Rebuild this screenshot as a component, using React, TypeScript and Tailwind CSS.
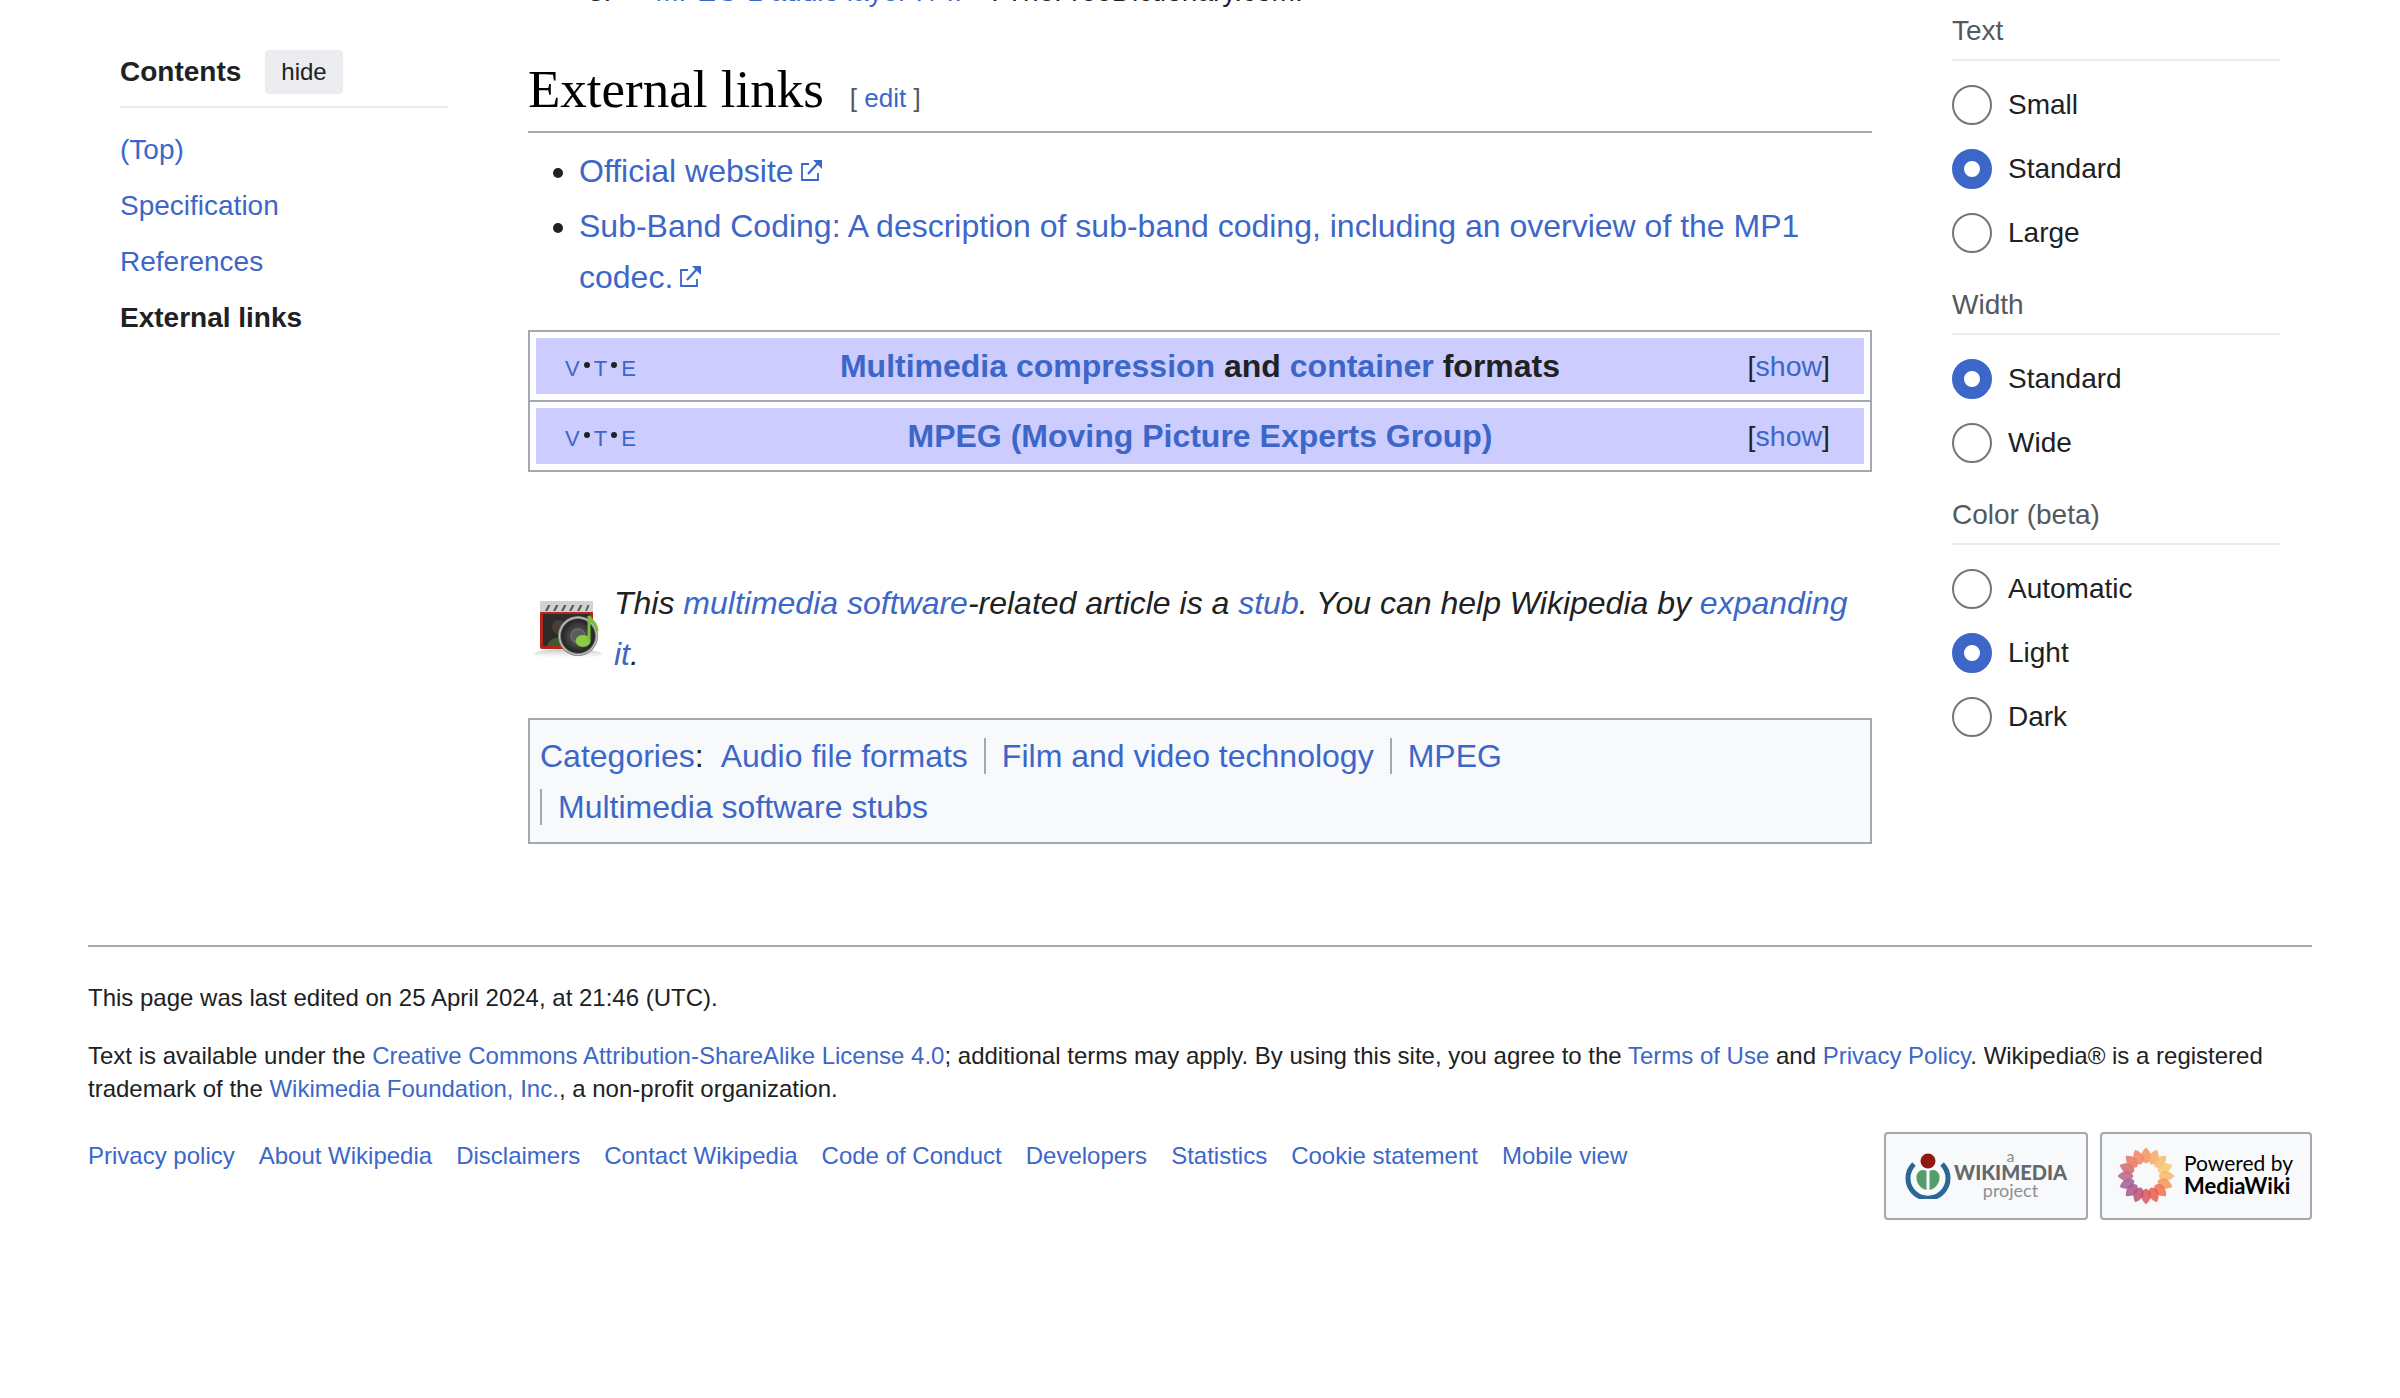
import React from "react";

const link = "text-[#3c67c8]";

function ExternalIcon() {
  return (
    <svg viewBox="0 0 12 12" className="inline-block w-[24px] h-[24px] ml-[5px] align-[-1px]" fill="none" stroke="#3c67c8">
      <path d="M5 2.5H1.5v8h8V7" strokeWidth="0.9" />
      <path d="M4.5 7.5L9.5 2" strokeWidth="1.1" />
      <path d="M7 .5h4.5V5z" fill="#3c67c8" stroke="none" />
    </svg>
  );
}

function Radio({ label, checked }: { label: string; checked?: boolean }) {
  return (
    <div className="flex items-center h-[40px] mb-[24px] last:mb-0">
      {checked ? (
        <span className="w-[40px] h-[40px] rounded-full border-[12px] border-[#3c67c8] bg-white" />
      ) : (
        <span className="w-[40px] h-[40px] rounded-full border-2 border-[#72777d] bg-white" />
      )}
      <span className="ml-[16px] text-[28px] text-[#202122]">{label}</span>
    </div>
  );
}

function Group({ title, items, checked }: { title: string; items: string[]; checked: string }) {
  return (
    <div className="mb-[32px]">
      <div className="text-[28px] leading-[40px] text-[#54595d] border-b-2 border-[#eaecf0] pb-[8px] mb-[24px]">
        {title}
      </div>
      {items.map((item) => (
        <Radio key={item} label={item} checked={item === checked} />
      ))}
    </div>
  );
}

function Dot() {
  return <span className="inline-block w-[6px] h-[6px] mx-[4px] rounded-full bg-[#202122] align-[8px]" />;
}

function Navbox({ children }: { children: React.ReactNode }) {
  return (
    <div className="bg-[#ccccff] h-[56px] grid grid-cols-[1fr_auto_1fr] items-center text-[32px] font-bold">
      <div className={`pl-[29px] pt-[6px] text-[22px] leading-[28px] font-normal whitespace-nowrap ${link}`}>
        V<Dot />T<Dot />E
      </div>
      <div>{children}</div>
      <div className="justify-self-end pr-[34px] text-[28.5px] font-normal text-[#202122]">
        [<span className={link}>show</span>]
      </div>
    </div>
  );
}

function StubIcon() {
  return (
    <svg viewBox="0 0 68 64" className="ml-[6px] w-[68px] h-[64px] shrink-0">
      <defs>
        <radialGradient id="disc" cx="0.5" cy="0.5" r="0.5">
          <stop offset="0" stopColor="#777" />
          <stop offset="0.4" stopColor="#4a4a4a" />
          <stop offset="0.82" stopColor="#242424" />
          <stop offset="0.92" stopColor="#c4c4c4" />
          <stop offset="1" stopColor="#777" />
        </radialGradient>
        <linearGradient id="shade" x1="0" y1="0" x2="0" y2="1">
          <stop offset="0" stopColor="#bbb" stopOpacity="0.9" />
          <stop offset="1" stopColor="#eee" stopOpacity="0" />
        </linearGradient>
      </defs>
      <ellipse cx="34" cy="57" rx="34" ry="5" fill="url(#shade)" />
      <rect x="6" y="14" width="53" height="38" rx="2" fill="#b3261b" />
      <rect x="9" y="17" width="47" height="32" fill="#2e2c2a" />
      <circle cx="25" cy="30" r="7" fill="#4a3d32" />
      <path d="M13 49c2-7 8-9 14-8v8z" fill="#3d5a2c" />
      <rect x="6" y="4" width="53" height="11" rx="1" fill="#d2d2d2" />
      <path d="M11 14l3-6h2.5l-3 6zm8 0l3-6h2.5l-3 6zm8 0l3-6h2.5l-3 6zm8 0l3-6h2.5l-3 6zm8 0l3-6h2.5l-3 6zm8 0l2.500-6h2l-2.500 6z" fill="#5a5a5a" />
      <circle cx="44" cy="39" r="20" fill="url(#disc)" />
      <circle cx="44" cy="39" r="7" fill="#5c5c5c" stroke="#888" strokeWidth="0.7" />
      <ellipse cx="49" cy="44" rx="7.5" ry="6" fill="#8ccb45" />
      <path d="M55 44V19c2 5 8 7 8 15" fill="none" stroke="#7dbd3c" strokeWidth="3" />
    </svg>
  );
}

function WikimediaLogo() {
  return (
    <svg viewBox="0 0 46 46" className="w-[46px] h-[46px] shrink-0">
      <path d="M9 11a20 20 0 1 0 28 0" fill="none" stroke="#2a6797" strokeWidth="5" />
      <path d="M21.5 18v19a13 13 0 0 1-10-14c.6-4 5-8 10-5z" fill="#559c6b" />
      <path d="M24.5 18v19a13 13 0 0 0 10-14c-.6-4-5-8-10-5z" fill="#559c6b" />
      <circle cx="23" cy="8" r="7.5" fill="#8f1a10" />
    </svg>
  );
}

function MediaWikiLogo() {
  const petals = Array.from({ length: 16 }, (_, i) => i * 22.5);
  const colors = ["#f4915f", "#f7a864", "#f9bb6b", "#fac66f", "#f8b76a", "#f4955c", "#ee7052", "#e85e4e", "#d8565e", "#c0506f", "#a85787", "#9f5d98", "#b66489", "#d2696f", "#e8755f", "#f08560"];
  return (
    <svg viewBox="-30 -30 60 60" className="w-[58px] h-[58px] shrink-0">
      {petals.map((deg, i) => (
        <path key={deg} d="M0-13C7-16 7-23 0-29.5C-7-23-7-16 0-13z" fill={colors[i]} opacity="0.85" transform={`rotate(${deg})`} />
      ))}
    </svg>
  );
}

export default function App() {
  return (
    <div className="w-[2400px] h-[1398px] overflow-hidden bg-white font-['Liberation_Sans',sans-serif] text-[#202122]">
      <div className="flex pl-[120px] pr-[120px] gap-[80px]">
        <aside className="w-[328px] shrink-0 pt-[46px]">
          <div className="flex items-center border-b-2 border-[#eaecf0] pb-[8px] h-[52px] box-content">
            <span className="text-[28px] font-bold">Contents</span>
            <span className="ml-[24px] px-[16px] h-[44px] leading-[44px] bg-[#eaecf0] rounded-[4px] text-[24px]">hide</span>
          </div>
          <div className="mt-[14px] text-[28px] leading-[56px]">
            <div className={link}>(Top)</div>
            <div className={link}>Specification</div>
            <div className={link}>References</div>
            <div className="font-bold">External links</div>
          </div>
        </aside>

        <main className="w-[1344px] shrink-0">
          <div className="mt-[-34px] h-[52px] text-[28px] leading-[52px] pl-[60px] whitespace-nowrap">
            3.<span className={`ml-[44px] ${link}`}>MPEG-1 audio layer I / II</span>
            <ExternalIcon />. TheFreeDictionary.com.
          </div>
          <div className="mt-[41px] flex items-baseline border-b-2 border-[#a2a9b1] h-[74px]">
            <h2 className="font-['Liberation_Serif',serif] text-[53px] leading-[60px] text-black">External links</h2>
            <span className="ml-[26px] text-[26px] text-[#54595d]">
              [ <span className={link}>edit</span> ]
            </span>
          </div>
          <ul className="mt-[13px] pl-[51px] text-[32px] leading-[51px] list-disc">
            <li>
              <span className={link}>Official website</span>
              <ExternalIcon />
            </li>
            <li className="mt-[4px]">
              <span className={link}>Sub-Band Coding: A description of sub-band coding, including an overview of the MP1 codec.</span>
              <ExternalIcon />
            </li>
          </ul>
          <div className="mt-[27px] border-2 border-[#a2a9b1] p-[6px] h-[142px]">
            <Navbox>
              <span className={link}>Multimedia compression</span> and <span className={link}>container</span> formats
            </Navbox>
            <div className="border-t-2 border-[#a2a9b1] mx-[-6px] my-[6px]" />
            <Navbox>
              <span className={link}>MPEG (Moving Picture Experts Group)</span>
            </Navbox>
          </div>
          <div className="mt-[106px] flex items-center">
            <StubIcon />
            <div className="ml-[12px] italic text-[32px] leading-[51px]">
              This <span className={link}>multimedia software</span>-related article is a <span className={link}>stub</span>. You can help Wikipedia by <span className={link}>expanding it</span>.
            </div>
          </div>
          <div className="mt-[38px] border-2 border-[#a2a9b1] bg-[#f8f9fa] px-[10px] pt-[11px] pb-[9px] text-[32px] leading-[51px]">
            <span className={link}>Categories</span>:
            <span className={`ml-[17px] pr-[16px] border-r-2 border-[#a2a9b1] ${link}`}>Audio file formats</span>
            <span className={`pl-[16px] pr-[16px] border-r-2 border-[#a2a9b1] ${link}`}>Film and video technology</span>
            <span className={`pl-[16px] ${link}`}>MPEG</span>
            <div>
              <span className={`pl-[16px] border-l-2 border-[#a2a9b1] ${link}`}>Multimedia software stubs</span>
            </div>
          </div>
        </main>

        <aside className="w-[328px] shrink-0 pt-[11px]">
          <Group title="Text" items={["Small", "Standard", "Large"]} checked="Standard" />
          <Group title="Width" items={["Standard", "Wide"]} checked="Standard" />
          <Group title="Color (beta)" items={["Automatic", "Light", "Dark"]} checked="Light" />
        </aside>
      </div>

      <footer className="mx-[88px] mt-[101px] border-t-2 border-[#a2a9b1] pt-[34px] text-[24px] leading-[33px]">
        <p>This page was last edited on 25 April 2024, at 21:46 (UTC).</p>
        <p className="mt-[25px]">
          Text is available under the <span className={link}>Creative Commons Attribution-ShareAlike License 4.0</span>; additional terms may apply. By using this site, you agree to the <span className={link}>Terms of Use</span> and <span className={link}>Privacy Policy</span>. Wikipedia® is a registered trademark of the <span className={link}>Wikimedia Foundation, Inc.</span>, a non-profit organization.
        </p>
        <div className="mt-[27px] flex justify-between">
          <div className={`flex gap-[24px] mt-[7px] ${link}`}>
            <span>Privacy policy</span>
            <span>About Wikipedia</span>
            <span>Disclaimers</span>
            <span>Contact Wikipedia</span>
            <span>Code of Conduct</span>
            <span>Developers</span>
            <span>Statistics</span>
            <span>Cookie statement</span>
            <span>Mobile view</span>
          </div>
          <div className="flex gap-[12px]">
            <div className="w-[204px] h-[88px] border-2 border-[#a2a9b1] rounded-[4px] bg-[#f8f9fa] flex items-center pl-[19px] gap-[3px]">
              <WikimediaLogo />
              <div className="flex flex-col items-center pb-[4px] font-['Lato',sans-serif] leading-none">
                <span className="text-[16px] leading-[14px] text-[#8a8f94]">a</span>
                <span className="text-[20px] leading-[18px] font-black text-[#63686c]">WIKIMEDIA</span>
                <span className="text-[18px] leading-[18px] text-[#8a8f94]">project</span>
              </div>
            </div>
            <div className="w-[212px] h-[88px] border-2 border-[#a2a9b1] rounded-[4px] bg-[#f8f9fa] flex items-center pl-[15px] gap-[9px]">
              <MediaWikiLogo />
              <div className="flex flex-col pb-[4px] font-['Lato',sans-serif] text-[#000] leading-[23px]">
                <span className="text-[21px]">Powered by</span>
                <span className="text-[22px] font-bold">MediaWiki</span>
              </div>
            </div>
          </div>
        </div>
      </footer>
    </div>
  );
}
